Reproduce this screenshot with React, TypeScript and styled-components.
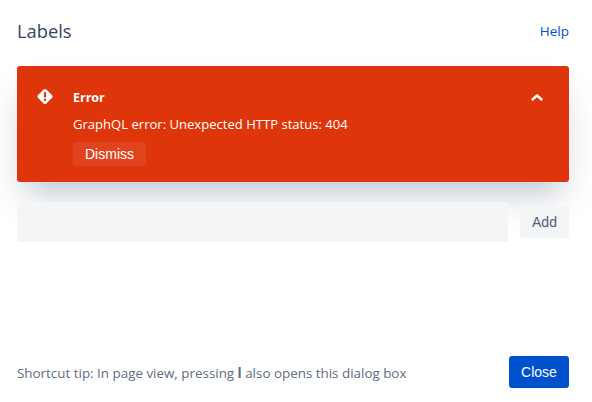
import React from 'react';
import styled, { createGlobalStyle } from 'styled-components';

const GlobalStyle = createGlobalStyle`
  html, body {
    margin: 0;
    padding: 0;
    background: #fff;
  }
  body {
    font-family: "Open Sans", "Noto Sans", "Liberation Sans", sans-serif;
  }
`;

const StyledDialog = styled.div`
  box-sizing: border-box;
  width: 592px;
  height: 402px;
  padding: 17px 23px 14px 17px;
  display: flex;
  flex-direction: column;
  overflow: hidden;
`;

const StyledHeader = styled.div`
  display: flex;
  align-items: center;
  justify-content: space-between;
  height: 28px;
  margin-bottom: 21px;
`;

const StyledTitle = styled.h1`
  margin: 0;
  font-size: 18.3px;
  line-height: 28px;
  font-weight: 400;
  color: #344563;
`;

const StyledHelp = styled.a`
  font-size: 13.5px;
  line-height: 26px;
  color: #0052cc;
  text-decoration: none;
`;

const StyledBanner = styled.div`
  box-sizing: border-box;
  height: 116px;
  padding: 21px 24px 16px 20px;
  display: flex;
  gap: 20px;
  background: #de350b;
  border-radius: 3px;
  color: #fff;
  box-shadow: 0 20px 32px -8px rgba(9, 30, 66, 0.25);
`;

const StyledBannerIcon = styled.svg`
  flex: none;
  width: 16px;
  height: 20px;
  margin-top: 1px;
`;

const StyledBannerBody = styled.div`
  flex: 1;
  display: flex;
  flex-direction: column;
  align-items: flex-start;
`;

const StyledBannerTitle = styled.div`
  font-size: 12.5px;
  line-height: 22px;
  font-weight: 700;
`;

const StyledBannerText = styled.div`
  font-size: 13.07px;
  line-height: 20px;
  margin-top: 5px;
`;

const StyledChevron = styled.svg`
  flex: none;
  width: 16px;
  height: 20px;
`;

const StyledButton = styled.button<{ $variant: 'banner' | 'subtle' | 'primary' }>`
  border: 0;
  border-radius: 3px;
  padding: 0;
  font-family: "Liberation Sans", Arial, sans-serif;
  font-size: 14px;
  color: ${({ $variant }) => ($variant === 'subtle' ? '#505f79' : '#fff')};
  background: ${({ $variant }) =>
    $variant === 'banner' ? 'rgba(255, 255, 255, 0.08)' : $variant === 'subtle' ? '#f4f5f7' : '#0052cc'};
`;

const StyledDismiss = styled(StyledButton)`
  width: 73px;
  height: 24px;
  margin-top: 8px;
`;

const StyledForm = styled.div`
  display: flex;
  align-items: center;
  gap: 12px;
  margin-top: 20px;
`;

const StyledInput = styled.input`
  flex: 1;
  min-width: 0;
  box-sizing: border-box;
  height: 40px;
  border: 0;
  border-radius: 3px;
  background: #f4f5f7;
`;

const StyledAdd = styled(StyledButton)`
  flex: none;
  width: 49px;
  height: 32px;
`;

const StyledFooter = styled.div`
  margin-top: auto;
  display: flex;
  align-items: center;
  justify-content: space-between;
`;

const StyledTip = styled.div`
  font-size: 13.4px;
  line-height: 20px;
  padding-top: 2px;
  color: #5e6c84;

  b {
    font-weight: 700;
  }
`;

const StyledClose = styled(StyledButton)`
  flex: none;
  width: 60px;
  height: 32px;
`;

const App: React.FC = () => (
  <>
    <GlobalStyle />
    <StyledDialog>
      <StyledHeader>
        <StyledTitle>Labels</StyledTitle>
        <StyledHelp href="#">Help</StyledHelp>
      </StyledHeader>
      <StyledBanner>
        <StyledBannerIcon viewBox="0 0 16 20">
          <path
            fill="#fff"
            d="M6.6 1.6a2 2 0 0 1 2.8 0l5.5 5.5a2 2 0 0 1 0 2.8l-5.5 5.5a2 2 0 0 1-2.8 0L1.1 9.9a2 2 0 0 1 0-2.8z"
          />
          <rect x="6.9" y="4" width="2.2" height="5.6" rx="1" fill="#de350b" />
          <circle cx="8" cy="11.7" r="1.2" fill="#de350b" />
        </StyledBannerIcon>
        <StyledBannerBody>
          <StyledBannerTitle>Error</StyledBannerTitle>
          <StyledBannerText>GraphQL error: Unexpected HTTP status: 404</StyledBannerText>
          <StyledDismiss $variant="banner">Dismiss</StyledDismiss>
        </StyledBannerBody>
        <StyledChevron viewBox="0 0 16 20">
          <path d="M3.5 12.5 8 8.5l4.5 4" fill="none" stroke="#fff" strokeWidth="2.4" strokeLinecap="round" strokeLinejoin="round" />
        </StyledChevron>
      </StyledBanner>
      <StyledForm>
        <StyledInput />
        <StyledAdd $variant="subtle">Add</StyledAdd>
      </StyledForm>
      <StyledFooter>
        <StyledTip>
          Shortcut tip: In page view, pressing <b>l</b> also opens this dialog box
        </StyledTip>
        <StyledClose $variant="primary">Close</StyledClose>
      </StyledFooter>
    </StyledDialog>
  </>
);

export default App;
